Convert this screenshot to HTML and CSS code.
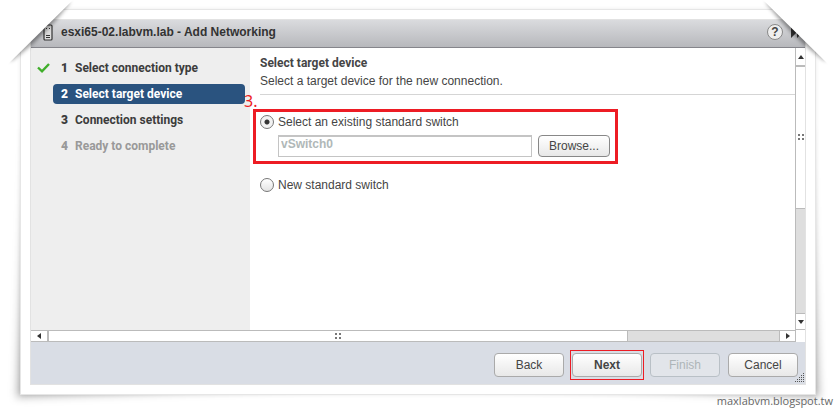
FILE: index.html
```
<!DOCTYPE html>
<html lang="en">
<head>
	<meta charset="UTF-8">
	<meta name="viewport" content="width=device-width">
	<title>Add Networking</title>
	<link rel="stylesheet" href="styles.css">
</head>
<body>
	<div class="frame">
		<div class="dialog">
			<header class="titlebar">
				<svg class="host-icon" width="10" height="17" viewBox="0 0 10 17" fill="none" stroke="#333">
					<rect x="1" y="1" width="8" height="15" rx="1" fill="#ddd" stroke-width="1.2"/>
					<path d="M3 4.5h1M6 4.5h1M3 11.5h4M3 13.5h4"/>
				</svg>
				<h1>esxi65-02.labvm.lab - Add Networking</h1>
				<button class="help" type="button" aria-label="Help">?</button>
				<button class="expand" type="button" aria-label="Expand">
					<svg width="14" height="12" viewBox="0 0 14 12" fill="#333"><path d="M0 0l6 6-6 6zM6 0l6 6-6 6z"/></svg>
				</button>
			</header>

			<div class="body">
				<nav class="steps">
					<a class="step" href="#type">
						<svg class="check" width="13" height="10" viewBox="0 0 13 10" fill="none" stroke="#3fae2a" stroke-width="2.4"><path d="M1 4.5l4 3.8L12 1"/></svg>
						<span class="label"><b>1</b>Select connection type</span>
					</a>
					<a class="step active" href="#device"><span class="label"><b>2</b>Select target device</span></a>
					<a class="step" href="#settings"><span class="label"><b>3</b>Connection settings</span></a>
					<a class="step disabled" href="#ready"><span class="label"><b>4</b>Ready to complete</span></a>
				</nav>

				<main class="content">
					<div class="intro">
						<h2>Select target device</h2>
						<p>Select a target device for the new connection.</p>
					</div>
					<div class="marked">
						<span class="mark">3.</span>
						<label class="option"><input type="radio" name="target" checked>Select an existing standard switch</label>
						<div class="picker">
							<input class="switch" type="text" value="vSwitch0" aria-label="Standard switch" disabled>
							<button class="browse" type="button">Browse...</button>
						</div>
					</div>
					<label class="option other"><input type="radio" name="target">New standard switch</label>
				</main>

				<div class="vscroll">
					<button type="button" aria-label="Scroll up"><svg width="6" height="4" viewBox="0 0 6 4"><path d="M0 4l3-4 3 4z"/></svg></button>
					<div class="vthumb"><svg width="6" height="6" viewBox="0 0 6 6"><path d="M0 0h2v2H0zM4 0h2v2H4zM0 4h2v2H0zM4 4h2v2H4z"/></svg></div>
					<button class="down" type="button" aria-label="Scroll down"><svg width="6" height="4" viewBox="0 0 6 4"><path d="M0 0h6L3 4z"/></svg></button>
				</div>
			</div>

			<div class="hscroll">
				<button type="button" aria-label="Scroll left"><svg width="4" height="6" viewBox="0 0 4 6"><path d="M4 0v6L0 3z"/></svg></button>
				<div class="hthumb"><svg width="6" height="6" viewBox="0 0 6 6"><path d="M0 0h2v2H0zM4 0h2v2H4zM0 4h2v2H0zM4 4h2v2H4z"/></svg></div>
				<button class="right" type="button" aria-label="Scroll right"><svg width="4" height="6" viewBox="0 0 4 6"><path d="M0 0v6l4-3z"/></svg></button>
			</div>

			<footer class="actions">
				<button type="button">Back</button>
				<span class="next"><button type="button">Next</button></span>
				<button type="button" disabled>Finish</button>
				<button type="button">Cancel</button>
				<svg class="grip" width="10" height="10" viewBox="0 0 10 10" stroke="#555" stroke-dasharray="1 1"><path d="M8 .5h1M6 2.5h3M4 4.5h5M2 6.5h7M0 8.5h9"/></svg>
			</footer>
		</div>
	</div>

	<svg class="corner left" width="84" height="76" viewBox="0 0 84 76">
		<defs>
			<filter id="soft" x="-20%" y="-20%" width="140%" height="140%"><feGaussianBlur stdDeviation="2"/></filter>
		</defs>
		<path d="M70 2Q45 36 12 60L8 60 66 1z" fill="#000" fill-opacity=".45" filter="url(#soft)"/>
		<path d="M0 0H73L0 72z" fill="#fff"/>
	</svg>
	<svg class="corner right-side" width="84" height="76" viewBox="0 0 84 76">
		<path d="M14 2Q39 36 72 60L76 60 18 1z" fill="#000" fill-opacity=".45" filter="url(#soft)"/>
		<path d="M84 0H11L84 72z" fill="#fff"/>
	</svg>
	<div class="credit">maxlabvm.blogspot.tw</div>
</body>
</html>
```
FILE: styles.css
```
* {
	box-sizing: border-box;
}

body {
	margin: 0;
	padding: 9px 20px 14px;
	height: 100vh;
	min-height: 380px;
	position: relative;
	overflow: hidden;
	background: #fff;
	color: #454545;
	font: 12px/16px "Liberation Sans", Arial, sans-serif;
}

h1, h2, p {
	margin: 0;
	font-size: 12px;
}

button, input {
	font: inherit;
	color: inherit;
	margin: 0;
}

.frame {
	height: 100%;
	padding: 9px;
	border: 1px solid #e6e6e6;
	background: #fff;
	position: relative;
	box-shadow: 0 0 4px rgba(0,0,0,.08);
}

/* lifted bottom corners */
.frame::before,
.frame::after {
	content: "";
	position: absolute;
	z-index: -1;
	bottom: 3px;
	width: 45%;
	height: 70%;
	background: rgba(0,0,0,.3);
	filter: blur(4px);
}

.frame::before {
	left: 1px;
	transform: skew(-4deg) rotate(-2deg);
}

.frame::after {
	right: 1px;
	transform: skew(4deg) rotate(2deg);
}

.dialog {
	height: 100%;
	display: flex;
	flex-direction: column;
	border: 1px solid #e2e2e2;
	background: #fff;
}

.titlebar {
	height: 28px;
	flex: none;
	display: flex;
	align-items: center;
	padding: 0 0 4px 12px;
	border-bottom: 1px solid #85858b;
	background: linear-gradient(#dadbde, #b7b8bc);
}

.titlebar h1 {
	flex: 1;
	padding-left: 8px;
	color: #333;
}

.host-icon {
	margin-top: 2px;
}

.help {
	width: 16px;
	height: 16px;
	padding: 0;
	border: 1px solid #888;
	border-radius: 50%;
	background: #eee;
	font-weight: bold;
	line-height: 14px;
}

.expand {
	padding: 0;
	margin-left: 8px;
	border: 0;
	background: none;
	display: flex;
}

.body {
	flex: 1;
	min-height: 0;
	display: flex;
}

.steps {
	width: 219px;
	padding: 10px 5px 0 22px;
	background: #eee;
}

.step {
	display: block;
	height: 20px;
	margin-bottom: 6px;
	padding-left: 8px;
	border-radius: 4px;
	color: #3c3c3c;
	font-family: Roboto, sans-serif;
	font-weight: bold;
	line-height: 20px;
	text-decoration: none;
	position: relative;
}

.step b {
	display: inline-block;
	width: 14px;
}

.step.active {
	background: #2a537f;
	color: #fff;
}

.step.disabled {
	color: #999;
}

.check {
	position: absolute;
	left: -16px;
	top: 5px;
}

.content {
	flex: 1;
	min-width: 0;
	padding-left: 3px;
}

.intro {
	margin-left: 7px;
	padding: 6px 0 4px;
	border-bottom: 1px solid #d5d5d5;
	line-height: 18px;
}

.intro h2 {
	font-family: Roboto, sans-serif;
}

.marked {
	width: 365px;
	margin-top: 14px;
	padding: 2px 5px 4px 4px;
	border: 3px solid #ed1c24;
	position: relative;
}

.mark {
	position: absolute;
	left: -12px;
	top: -20px;
	color: #ed1c24;
	font: 16px/18px "Noto Sans", sans-serif;
}

.option {
	display: flex;
	align-items: center;
	gap: 4px;
	height: 16px;
}

.option input {
	appearance: none;
	width: 14px;
	height: 14px;
	border: 1px solid #777;
	border-radius: 50%;
	background: linear-gradient(#fff, #e4e4e4);
}

.option input:checked {
	background: radial-gradient(circle, #333 2px, #f2f2f2 3px);
}

.option.other {
	margin: 13px 0 0 7px;
}

.picker {
	display: flex;
	gap: 6px;
	padding: 5px 0 0 18px;
}

.switch {
	flex: 1;
	min-width: 0;
	height: 22px;
	padding: 0 2px 5px;
	border: 1px solid #c4c4c4;
	border-top-width: 2px;
	background: #fff;
	color: #b0b8b8;
	font-weight: bold;
}

.browse,
.actions button {
	border: 1px solid #888;
	border-radius: 4px;
	background: linear-gradient(#fff, #e8e8e8);
}

.browse {
	width: 72px;
	height: 22px;
	padding: 0;
}

.vscroll {
	width: 10px;
	display: flex;
	flex-direction: column;
	border-left: 1px solid #bbb;
	background: #dedede;
}

.vscroll button,
.hscroll button {
	padding: 0;
	border: 0;
	background: #fff;
	display: flex;
	align-items: center;
	justify-content: center;
}

.vscroll button {
	height: 17px;
}

.vscroll svg,
.hscroll svg {
	fill: #333;
}

.vscroll .vthumb svg,
.hscroll .hthumb svg {
	fill: #777;
}

.vthumb {
	flex: 0 0 51%;
	border: solid #bbb;
	border-width: 2px 0 1px;
	background: #fff;
	display: flex;
	align-items: center;
	justify-content: center;
}

.vscroll .down {
	margin-top: auto;
	border: solid #bbb;
	border-width: 1px 0;
}

.hscroll {
	height: 12px;
	flex: none;
	margin-right: 9px;
	display: flex;
	border: solid #bbb;
	border-width: 1px 1px 1px 0;
	background: #dedede;
}

.hscroll button {
	width: 16px;
}

.hthumb {
	flex: 0 0 76%;
	border: solid #bbb;
	border-width: 0 1px 0 2px;
	background: #fff;
	display: flex;
	align-items: center;
	justify-content: center;
}

.hscroll .right {
	margin-left: auto;
	border-left: 1px solid #bbb;
}

.actions {
	height: 42px;
	flex: none;
	display: flex;
	align-items: center;
	justify-content: flex-end;
	gap: 8px;
	padding: 4px 7px 0 0;
	background: #d9dde5;
	position: relative;
}

.actions button {
	width: 70px;
	height: 24px;
	padding: 0;
	border-color: #aaa;
}

.actions button:disabled {
	border-color: #b9c0c6;
	background: #e2e5ea;
	color: #aeb5b8;
}

.next {
	margin: 0 -2px;
	padding: 2px 1px;
	border: 1px solid #ed1c24;
}

.next button {
	font-weight: bold;
}

.grip {
	position: absolute;
	right: 0;
	bottom: 1px;
}

.corner {
	position: absolute;
	top: 0;
	pointer-events: none;
}

.corner.left {
	left: 0;
}

.corner.right-side {
	right: 0;
}

.credit {
	position: absolute;
	right: 3px;
	bottom: 0;
	color: #666;
	font: 11px/16px "Open Sans", sans-serif;
}
```
